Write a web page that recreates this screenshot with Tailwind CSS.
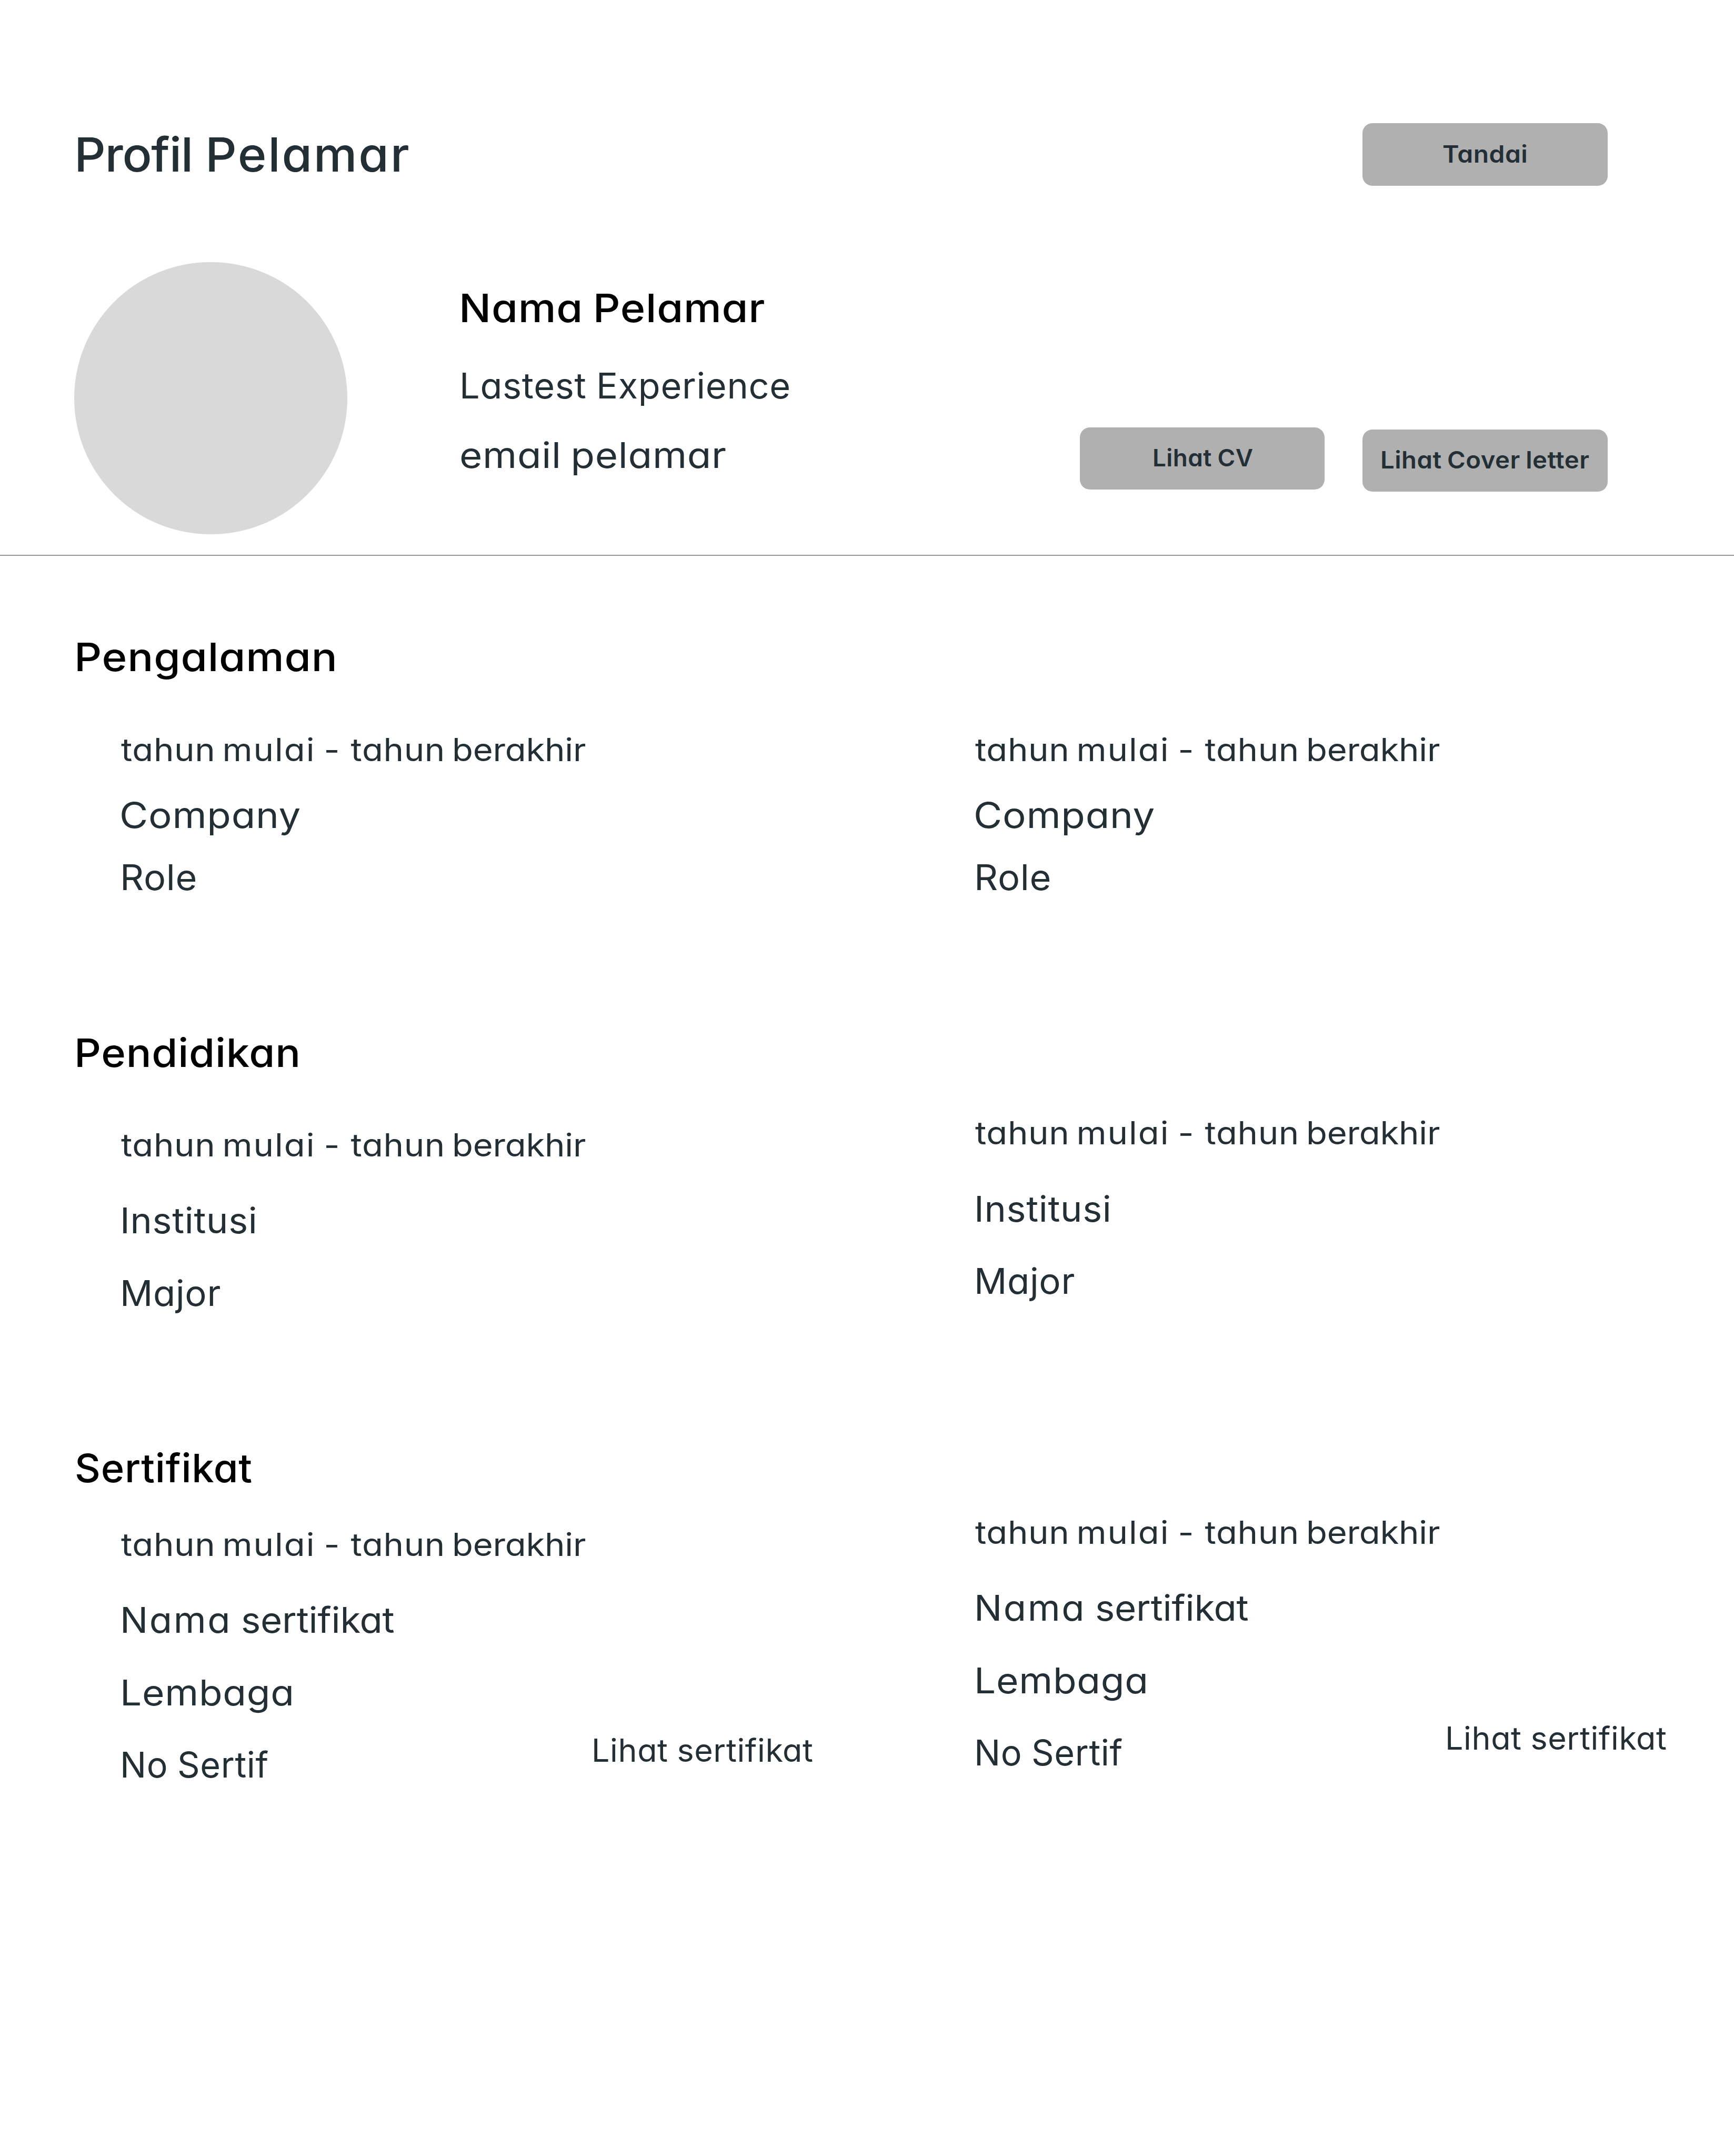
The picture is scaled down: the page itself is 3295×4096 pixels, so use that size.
<!DOCTYPE html>
<html lang="id">
<head>
<meta charset="utf-8">
<title>Profil Pelamar</title>
<script src="https://cdn.jsdelivr.net/npm/@tailwindcss/browser@4"></script>
</head>
<body class="bg-white">
<main class="w-[3295px] h-[4096px] overflow-hidden bg-white whitespace-nowrap font-[Inter,sans-serif] text-[67.27px] leading-[103px] tracking-[0.67px] text-[#242f35] [font-feature-settings:'cv11']">

  <header class="pt-[224.5px] pb-[39.8px] pl-[141px] pr-[240.3px] border-b-2 border-[#969696]">
    <div class="flex items-center justify-between">
      <h1 class="origin-left scale-x-[1.0394] text-[89.7px] leading-[138px] font-[530] [word-spacing:-1.5px]"><span class="tracking-[-1.3px]">Profil</span> <span class="tracking-[2.6px]">Pelamar</span></h1>
      <button class="flex items-center w-[465.3px] h-[118.2px] rounded-[19px] bg-[#b0b0b0] pl-[151.8px] pb-[2px] text-[44.85px] leading-[72px] font-semibold tracking-[0.45px]"><span class="origin-left scale-x-[1.0682]">Tandai</span></button>
    </div>

    <div class="mt-[135.2px] flex h-[517px]">
      <div class="w-[518.7px] h-[517px] rounded-full bg-[#d9d9d9]"></div>
      <div class="ml-[213.3px] pt-[30.3px]">
        <h2 class="-ml-[0.5px] origin-left scale-x-[1.0809] text-[74.75px] leading-[114px] font-[530] text-black tracking-[0.75px] [word-spacing:-3.44px]">Nama Pelamar</h2>
        <p class="mt-[39px] origin-left scale-x-[1.0179] [word-spacing:-1.62px]">Lastest Experience</p>
        <p class="mt-[28.6px] origin-left scale-x-[1.106] [word-spacing:-3.59px]">email pelamar</p>
      </div>
      <div class="ml-auto flex items-start gap-[72.4px] text-[44.85px] leading-[72px] font-semibold tracking-[0.45px]">
        <button class="mt-[314.6px] flex items-center w-[465.3px] h-[118.2px] rounded-[19px] bg-[#b0b0b0] pl-[138px] pb-[2px]"><span class="origin-left scale-x-[1.021] [word-spacing:-1.31px]">Lihat CV</span></button>
        <button class="mt-[318.4px] flex items-center w-[465.3px] h-[118.2px] rounded-[19px] bg-[#b0b0b0] pl-[34px] pb-[2px]"><span class="origin-left scale-x-[1.0536] [word-spacing:-1.78px]">Lihat Cover letter</span></button>
      </div>
    </div>
  </header>

  <section class="pt-[135px]">
    <h2 class="ml-[140.6px] origin-left scale-x-[1.0904] text-[74.75px] leading-[114px] font-[530] text-black tracking-[0.75px]">Pengalaman</h2>
    <div class="mt-[72.1px] pl-[228.4px] grid grid-cols-[1622.7px_1fr]">
      <div>
        <p class="ml-[2px] origin-left scale-x-[1.09] text-[59.8px] leading-[92px] tracking-[0.6px] [word-spacing:-5.5px]">tahun <span class="tracking-[1.8px]">mulai</span> <span class="ml-[2.8px] mr-[6.9px]">-</span> tahun <span class="tracking-[-0.2px]">berakhir</span></p>
        <p class="mt-[27.5px] -ml-[1.2px] origin-left scale-x-[1.1062]">Company</p>
        <p class="mt-[15.3px] origin-left scale-x-[1.0448]">Role</p>
      </div>
      <div>
        <p class="ml-[2px] origin-left scale-x-[1.09] text-[59.8px] leading-[92px] tracking-[0.6px] [word-spacing:-5.5px]">tahun <span class="tracking-[1.8px]">mulai</span> <span class="ml-[2.8px] mr-[6.9px]">-</span> tahun <span class="tracking-[-0.2px]">berakhir</span></p>
        <p class="mt-[27.5px] -ml-[1.2px] origin-left scale-x-[1.1062]">Company</p>
        <p class="mt-[15.3px] origin-left scale-x-[1.0448]">Role</p>
      </div>
    </div>
  </section>

  <section class="pt-[224.3px]">
    <h2 class="ml-[140.7px] origin-left scale-x-[1.0631] text-[74.75px] leading-[114px] font-[530] text-black tracking-[0.75px]">Pendidikan</h2>
    <div class="mt-[49.3px] pl-[228.4px] grid grid-cols-[1622.7px_1fr]">
      <div class="pt-[22.9px]">
        <p class="ml-[2px] origin-left scale-x-[1.09] text-[59.8px] leading-[92px] tracking-[0.6px] [word-spacing:-5.5px]">tahun <span class="tracking-[1.8px]">mulai</span> <span class="ml-[2.8px] mr-[6.9px]">-</span> tahun <span class="tracking-[-0.2px]">berakhir</span></p>
        <p class="mt-[46.6px] origin-left scale-x-[1.0412]">Institusi</p>
        <p class="mt-[34.3px] origin-left scale-x-[1.026]">Major</p>
      </div>
      <div>
        <p class="ml-[2px] origin-left scale-x-[1.09] text-[59.8px] leading-[92px] tracking-[0.6px] [word-spacing:-5.5px]">tahun <span class="tracking-[1.8px]">mulai</span> <span class="ml-[2.8px] mr-[6.9px]">-</span> tahun <span class="tracking-[-0.2px]">berakhir</span></p>
        <p class="mt-[46.6px] origin-left scale-x-[1.0412]">Institusi</p>
        <p class="mt-[34.3px] origin-left scale-x-[1.026]">Major</p>
      </div>
    </div>
  </section>

  <section class="pt-[224.4px]">
    <h2 class="ml-[141.9px] origin-left scale-x-[1.0134] text-[74.75px] leading-[114px] font-[530] text-black tracking-[0.75px]">Sertifikat</h2>
    <div class="mt-[18.8px] pl-[228.4px] grid grid-cols-[1622.7px_1fr]">
      <div class="pt-[22.9px] flex items-end">
        <div class="w-[895.3px]">
          <p class="ml-[2px] origin-left scale-x-[1.09] text-[59.8px] leading-[92px] tracking-[0.6px] [word-spacing:-5.5px]">tahun <span class="tracking-[1.8px]">mulai</span> <span class="ml-[2.8px] mr-[6.9px]">-</span> tahun <span class="tracking-[-0.2px]">berakhir</span></p>
          <p class="mt-[46.5px] origin-left scale-x-[1.0518] [word-spacing:-2.5px]"><span class="tracking-[2.4px]">Nama</span> <span class="tracking-[-0.2px]">sertifikat</span></p>
          <p class="mt-[34.3px] origin-left scale-x-[1.085]">Lembaga</p>
          <p class="mt-[34.3px] origin-left scale-x-[0.9891] [word-spacing:-1.83px]">No Sertif</p>
        </div>
        <a class="mb-[33.4px] origin-left scale-x-[1.0198] text-[59.8px] leading-[92px] tracking-[0.6px] [word-spacing:-0.99px]">Lihat sertifikat</a>
      </div>
      <div class="flex items-end mb-[22.9px]">
        <div class="w-[895.3px]">
          <p class="ml-[2px] origin-left scale-x-[1.09] text-[59.8px] leading-[92px] tracking-[0.6px] [word-spacing:-5.5px]">tahun <span class="tracking-[1.8px]">mulai</span> <span class="ml-[2.8px] mr-[6.9px]">-</span> tahun <span class="tracking-[-0.2px]">berakhir</span></p>
          <p class="mt-[46.5px] origin-left scale-x-[1.0518] [word-spacing:-2.5px]"><span class="tracking-[2.4px]">Nama</span> <span class="tracking-[-0.2px]">sertifikat</span></p>
          <p class="mt-[34.3px] origin-left scale-x-[1.085]">Lembaga</p>
          <p class="mt-[34.3px] origin-left scale-x-[0.9891] [word-spacing:-1.83px]">No Sertif</p>
        </div>
        <a class="mb-[33.4px] origin-left scale-x-[1.0198] text-[59.8px] leading-[92px] tracking-[0.6px] [word-spacing:-0.99px]">Lihat sertifikat</a>
      </div>
    </div>
  </section>
</main>
</body>
</html>
